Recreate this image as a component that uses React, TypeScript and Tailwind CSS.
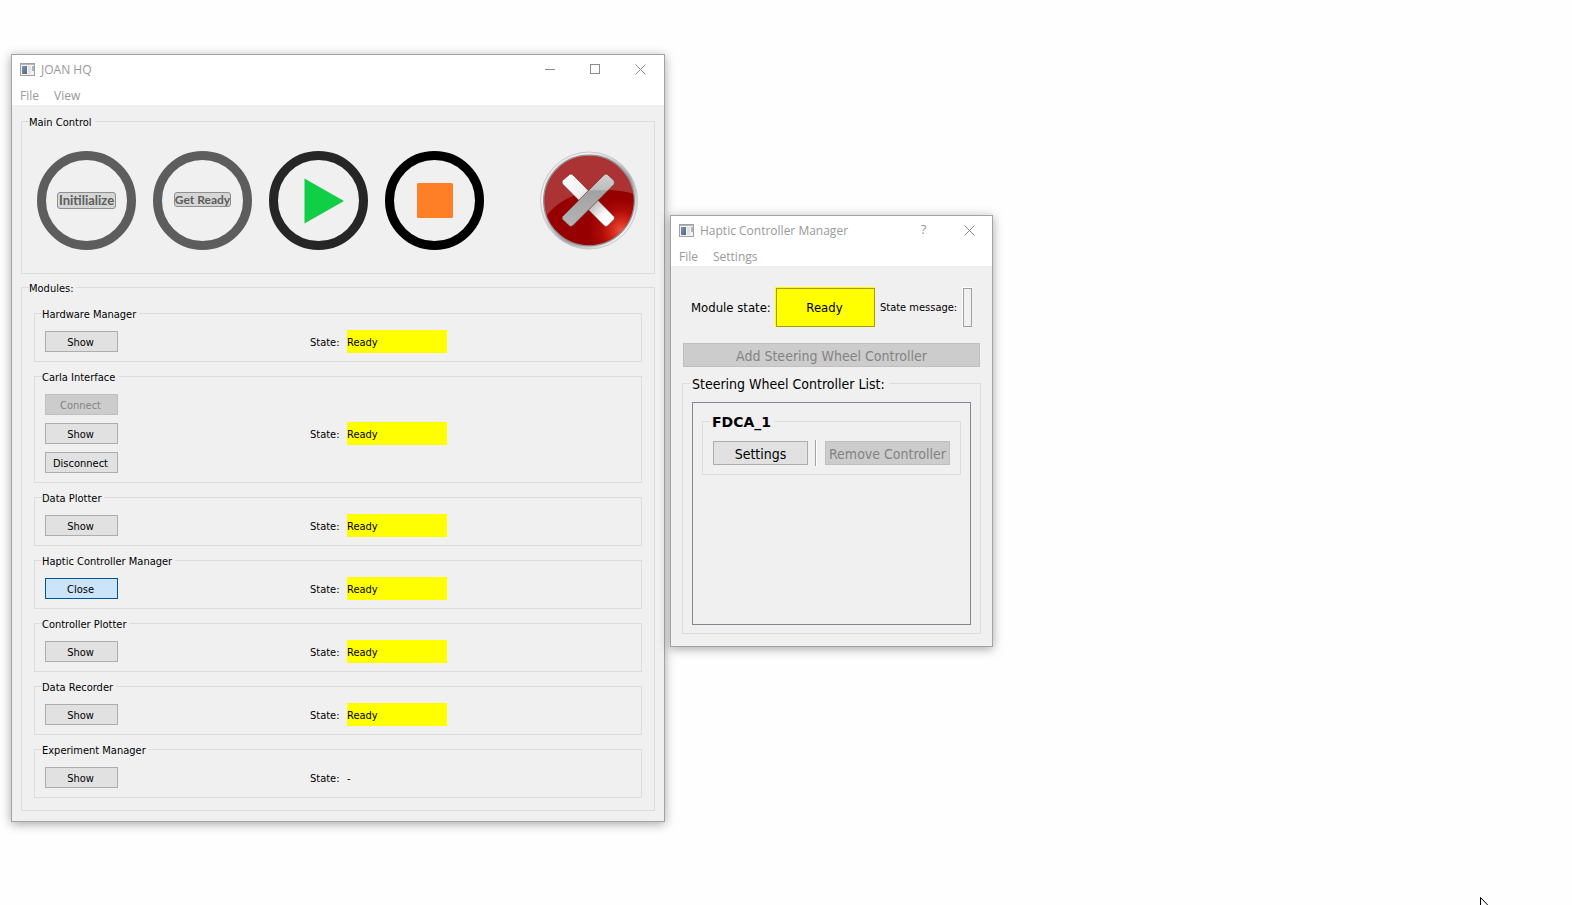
import React from "react";

const tahoma = "font-['DejaVu_Sans_Condensed','Noto_Sans',sans-serif]";

function Group({ title, children }: { title: string; children: React.ReactNode }) {
  return (
    <fieldset className="min-w-0 border border-[#dcdcdc]">
      <legend className="ml-[7px] pt-[2px] pr-[3px] text-[11px] leading-[13px]">{title}</legend>
      {children}
    </fieldset>
  );
}

function AppIcon() {
  return (
    <svg width="16" height="14" viewBox="0 0 16 14" aria-hidden="true">
      <defs>
        <linearGradient id="pane" x1="0" y1="0" x2="1" y2="1">
          <stop offset="0" stopColor="#6f9ac4" />
          <stop offset="1" stopColor="#5b6470" />
        </linearGradient>
      </defs>
      <rect x="0.5" y="0.5" width="14" height="12" fill="#f2f2f2" stroke="#a0a0a0" />
      <path d="M1 1.5h13" stroke="#b8b8b8" />
      <rect x="2" y="3" width="5" height="8" fill="url(#pane)" />
      <rect x="8" y="3" width="3" height="8" fill="#e2e2e2" />
      <rect x="12" y="3" width="2" height="5" fill="#9fb9cc" />
    </svg>
  );
}

function CloseGlyph() {
  return (
    <svg width="11" height="11" viewBox="0 0 11 11" aria-hidden="true">
      <path d="M0.5 0.5l10 10M10.5 0.5l-10 10" stroke="#8c8c8c" fill="none" />
    </svg>
  );
}

function Frame({
  title,
  menu,
  controls,
  className,
  children,
}: {
  title: string;
  menu: string[];
  controls: React.ReactNode;
  className: string;
  children: React.ReactNode;
}) {
  return (
    <section
      aria-label={title}
      className={
        "absolute border border-[#a3a3a3] bg-[#f0f0f0] shadow-[0_2px_10px_rgba(0,0,0,0.35)] " + className
      }
    >
      <header className="bg-white font-['Open_Sans',sans-serif] text-[12px] text-[#999999]">
        <div className="flex h-[30px] items-center pl-2">
          <AppIcon />
          <h1 className="ml-[5px] flex-1">{title}</h1>
          {controls}
        </div>
        <nav className="flex h-5 items-center gap-[15px] pt-[2px] pl-2 leading-[18px]">
          {menu.map((m) => (
            <button key={m}>{m}</button>
          ))}
        </nav>
      </header>
      {children}
    </section>
  );
}

const plain = "h-[21px] w-[73px] border border-[#adadad] bg-[#e1e1e1] pt-[2px] pr-[2px] text-[11px] leading-[17px]";
const active = "h-[21px] w-[73px] border border-[#005499] bg-[#cce4f7] pt-[2px] pr-[2px] text-[11px] leading-[17px]";
const disabled =
  "h-[21px] w-[73px] border border-[#bfbfbf] bg-[#cccccc] pt-[2px] pr-[2px] text-[11px] leading-[17px] text-[#838383]";

const modules = [
  { name: "Hardware Manager", actions: ["Show"], state: "Ready" },
  { name: "Carla Interface", actions: ["Connect", "Show", "Disconnect"], state: "Ready" },
  { name: "Data Plotter", actions: ["Show"], state: "Ready" },
  { name: "Haptic Controller Manager", actions: ["Close"], state: "Ready" },
  { name: "Controller Plotter", actions: ["Show"], state: "Ready" },
  { name: "Data Recorder", actions: ["Show"], state: "Ready" },
  { name: "Experiment Manager", actions: ["Show"], state: "-" },
];

function ModuleRow({ name, actions, state }: (typeof modules)[number]) {
  return (
    <Group title={name}>
      <div className="grid grid-cols-[265px_37px_100px] items-center pt-[9px] pb-2 pl-[10px] text-[11px] leading-[21px]">
        <div className="flex flex-col gap-2 py-px">
          {actions.map((a) => (
            <button
              key={a}
              disabled={a === "Connect"}
              className={a === "Connect" ? disabled : a === "Close" ? active : plain}
            >
              {a}
            </button>
          ))}
        </div>
        <span className="pt-[2px]">State:</span>
        <output className={state === "Ready" ? "bg-[#ffff00] pt-[2px]" : "pt-[2px]"}>{state}</output>
      </div>
    </Group>
  );
}

function QuitIcon() {
  return (
    <svg width="100" height="100" viewBox="0 0 100 100" aria-hidden="true">
      <defs>
        <linearGradient id="rim" x1="0" y1="0" x2="1" y2="1">
          <stop offset="0" stopColor="#d4d4d4" />
          <stop offset="0.25" stopColor="#f4f4f4" />
          <stop offset="0.6" stopColor="#a6a8ac" />
          <stop offset="0.85" stopColor="#f2f2f2" />
          <stop offset="1" stopColor="#cfcfcf" />
        </linearGradient>
        <radialGradient id="glow" cx="0.86" cy="0.83" r="0.36">
          <stop offset="0" stopColor="#f0523f" />
          <stop offset="0.3" stopColor="#d32a1c" />
          <stop offset="0.6" stopColor="#b00c08" />
          <stop offset="1" stopColor="#960000" />
        </radialGradient>
        <linearGradient id="bar" x1="0" y1="0" x2="0" y2="1">
          <stop offset="0" stopColor="#d0d0d0" />
          <stop offset="0.3" stopColor="#bebebe" />
          <stop offset="0.32" stopColor="#a2a2a2" />
          <stop offset="1" stopColor="#b4b4b4" />
        </linearGradient>
        <linearGradient id="bar2" x1="0" y1="0" x2="1" y2="1">
          <stop offset="0" stopColor="#ffffff" />
          <stop offset="0.35" stopColor="#f0f0f0" />
          <stop offset="0.6" stopColor="#c4c4c4" />
          <stop offset="0.8" stopColor="#ffffff" />
        </linearGradient>
        <clipPath id="disc">
          <circle cx="50" cy="49.500" r="45" />
        </clipPath>
      </defs>
      <circle cx="50" cy="49.500" r="48.500" fill="url(#rim)" stroke="#c8c9cc" strokeWidth="1" />
      <circle cx="50" cy="49.500" r="45.300" fill="url(#glow)" stroke="#8d8b8e" strokeWidth="1.200" />
      <path
        d="M0 0H100V45C85 38 60 37 44 42C27 46 15 54 6 67L0 60Z"
        fill="#ffffff"
        fillOpacity="0.2"
        clipPath="url(#disc)"
      />
      <path
        d="M23.500 29.500L30.500 23.500Q32.500 22.500 34 24L75 65.500Q76 67 75 68.500L68.500 75Q66.500 76 65 74.500L23.500 33Q22.500 31 23.500 29.500Z"
        fill="url(#bar2)"
        stroke="#6d1a1a"
        strokeWidth="0.600"
      />
      <path
        d="M65 24Q66.500 22.500 68.500 23.500L75 29.500Q76 31.500 75 33.500L34 74.500Q32 76 30.500 75L23.500 68.500Q22.500 67 23.500 65.500Z"
        fill="url(#bar)"
        stroke="#6d1a1a"
        strokeWidth="0.600"
      />
    </svg>
  );
}

const ring = "flex size-[99px] items-center justify-center rounded-full border-[9px]";

export default function App() {
  return (
    <main className={"relative h-screen overflow-hidden bg-[#fefefe] text-black " + tahoma}>
      <Frame
        title="JOAN HQ"
        menu={["File", "View"]}
        className="top-[54px] left-[11px] w-[654px]"
        controls={
          <div className="flex h-full pr-px pb-[2px]">
            <button aria-label="Minimize" className="flex w-[45px] items-center justify-center">
              <svg width="10" height="11" viewBox="0 0 10 11" aria-hidden="true">
                <path d="M0 5.500h10" stroke="#8c8c8c" />
              </svg>
            </button>
            <button aria-label="Maximize" className="flex w-[45px] items-center justify-center">
              <svg width="10" height="10" viewBox="0 0 10 10" aria-hidden="true">
                <rect x="0.5" y="0.5" width="9" height="9" fill="none" stroke="#8c8c8c" />
              </svg>
            </button>
            <button aria-label="Close" className="flex w-[46px] items-center justify-center">
              <CloseGlyph />
            </button>
          </div>
        }
      >
        <div className="flex flex-col gap-[6px] px-[9px] pt-[9px] pb-[10px]">
          <Group title="Main Control">
            <div className="flex gap-[17px] px-[15px] py-[22px]">
              <button className={ring + " border-[#5d5d5d]"}>
                <span className="mb-px rounded-[3px] border border-[#8e8e8e] bg-[#d6d6d6] px-px font-['Lato',sans-serif] text-[13px] leading-[15px] font-bold text-[#5d5d5d]">
                  Initilialize
                </span>
              </button>
              <button className={ring + " border-[#5d5d5d]"}>
                <span className="mb-[3px] rounded-[3px] border border-[#8e8e8e] bg-[#d6d6d6] font-['Lato',sans-serif] text-[12px] leading-[13px] font-bold whitespace-nowrap text-[#5d5d5d]">
                  Get Ready
                </span>
              </button>
              <button aria-label="Start" className={ring + " border-[#262626]"}>
                <svg width="81" height="81" viewBox="0 0 81 81" aria-hidden="true">
                  <path d="M26.500 18.500L66 41L26.500 63.500Z" fill="#10cf47" />
                </svg>
              </button>
              <button aria-label="Stop" className={ring + " border-black"}>
                <svg width="81" height="81" viewBox="0 0 81 81" aria-hidden="true">
                  <rect x="23" y="23" width="36" height="35" rx="1.500" fill="#ff7f27" />
                </svg>
              </button>
              <button aria-label="Quit" className="ml-auto size-[100px]">
                <QuitIcon />
              </button>
            </div>
          </Group>
          <Group title="Modules:">
            <div className="flex flex-col gap-[7px] px-3 pt-[11px] pb-3">
              {modules.map((m) => (
                <ModuleRow key={m.name} {...m} />
              ))}
            </div>
          </Group>
        </div>
      </Frame>

      <Frame
        title="Haptic Controller Manager"
        menu={["File", "Settings"]}
        className="top-[215px] left-[670px] w-[323px]"
        controls={
          <div className="flex h-full pb-[2px]">
            <button className="flex w-[45px] items-center justify-center text-[13px]">?</button>
            <button aria-label="Close" className="flex w-[46px] items-center justify-center">
              <CloseGlyph />
            </button>
          </div>
        }
      >
        <div className="px-[11px] pt-[21px] pb-3">
          <div className="flex h-10 items-center px-[9px] text-[13px]">
            <span className="w-[84px] pt-[2px] whitespace-nowrap">Module state:</span>
            <output className="h-10 w-[100px] border-t border-l border-[#ffff00] bg-[#ffff00]">
              <span className="flex h-full items-center justify-center border border-[#a0a000] pr-[2px]">Ready</span>
            </output>
            <span className="ml-[5px] w-[82px] pt-[2px] text-[11px] whitespace-nowrap">State message:</span>
            <output aria-label="State message" className="h-10 w-[10px] border-t border-l border-white">
              <span className="block h-full border border-[#a0a0a0]" />
            </output>
          </div>
          <div className="mt-4 flex px-px">
            <button
              disabled
              className="h-6 w-full border border-[#bfbfbf] bg-[#cccccc] pt-[2px] text-[14px] leading-5 text-[#838383]"
            >
              Add Steering Wheel Controller
            </button>
          </div>
          <fieldset className="mt-[7px] border border-[#dcdcdc]">
            <legend className="ml-[7px] pt-[2px] pr-1 pl-[2px] text-[14px] leading-[17px]">
              Steering Wheel Controller List:
            </legend>
            <div className="px-[9px] pt-[9px] pb-2">
              <div className="h-[223px] border border-[#828790] px-[9px] pt-[9px]">
                <fieldset className="border border-[#dcdcdc]">
                  <legend className="ml-[7px] pt-[2px] pr-[3px] pl-[2px] font-['DejaVu_Sans',sans-serif] text-[14px] leading-[17px] font-bold">
                    FDCA_1
                  </legend>
                  <div className="flex items-center pt-[9px] pb-2 pl-[10px] text-[14px] leading-5">
                    <button className="h-6 w-[95px] border border-[#adadad] bg-[#e1e1e1] pt-[2px]">Settings</button>
                    <span className="ml-[7px] h-[26px] w-[2px] border-r border-l border-r-white border-l-[#a0a0a0]" />
                    <button
                      disabled
                      className="ml-2 h-6 w-[125px] border border-[#bfbfbf] bg-[#cccccc] pt-[2px] whitespace-nowrap text-[#838383]"
                    >
                      Remove Controller
                    </button>
                  </div>
                </fieldset>
              </div>
            </div>
          </fieldset>
        </div>
      </Frame>

      <svg className="absolute top-[897px] left-[1480px]" width="12" height="19" viewBox="0 0 12 19" aria-hidden="true">
        <path d="M0.500 0.500V16.500L4.200 13L7 18.500L9 17.500L6.500 12H11.500Z" fill="#ffffff" stroke="#000000" />
      </svg>
    </main>
  );
}
